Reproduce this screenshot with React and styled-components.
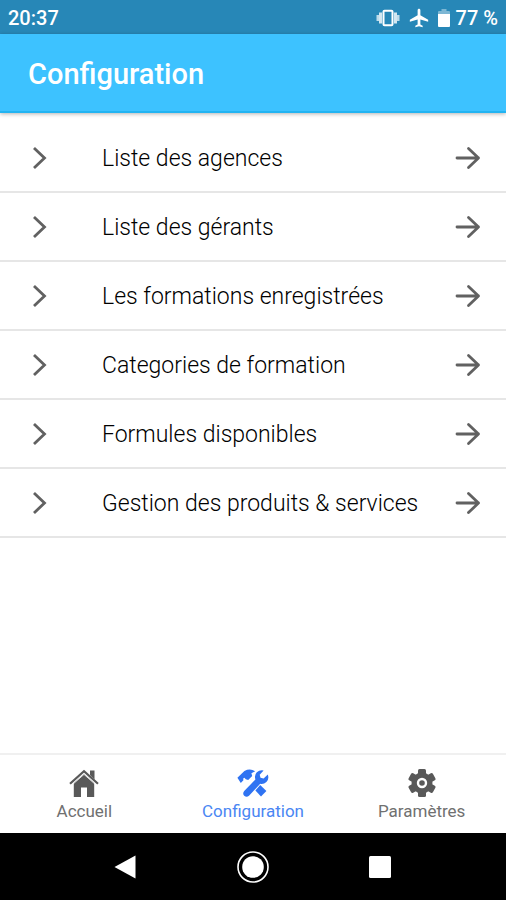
import React from 'react';
import styled, { createGlobalStyle } from 'styled-components';
import { MdAirplanemodeActive } from 'react-icons/md';

const HomeIcon = () => (
  <svg width="32" height="30" viewBox="0 0 32 30" fill="currentColor">
    <path d="M22 2.5h4.5v9L22 7z" />
    <path d="M16 6L5.8 15V29h7.2v-9.5h6V29h7.2V15z" />
    <path d="M2 15.8L16 3.2l14 12.6" fill="none" stroke="currentColor" strokeWidth="2.2" />
    <path d="M3.8 17.2L16 6.4l12.2 10.8" fill="none" stroke="#fff" strokeWidth=".8" />
  </svg>
);

const ToolsIcon = () => (
  <svg width="32" height="30" viewBox="0 0 32 30" fill="currentColor">
    <path d="M.4 9.8L7.4 3q5.6-3 10.8.2l-3.8 2 .8 2.7-4 4.2-2.4-.8-1.4-1.5-1.2.6.2 1.8-2.6 2.8z" />
    <path d="M23.2 17l6.2 6-5.4 5.4-5.6-6z" />
    <path d="M26.6 2.4l-3.9 4.4.8 3 3.1.7 4.2-4q1.6 4.4-1.4 7.4-2.8 2.6-6.2 1.8L12 27.8q-2.4 2-4.8 0-2-2.4 0-4.8L18.4 11.5q-1.4-4.2 1.4-7.2 3-2.8 6.8-1.9z" />
  </svg>
);

const GearIcon = () => (
  <svg width="32" height="30" viewBox="0 0 32 30" fill="currentColor">
    <rect x="12" y="1" width="8" height="28" rx="1.5" />
    <rect x="12" y="1" width="8" height="28" rx="1.5" transform="rotate(60 16 15)" />
    <rect x="12" y="1" width="8" height="28" rx="1.5" transform="rotate(120 16 15)" />
    <circle cx="16" cy="15" r="10.5" />
    <circle cx="16" cy="15" r="4" stroke="#fff" strokeWidth="2.4" />
  </svg>
);

const ChevronIcon = () => (
  <svg width="28" height="28" viewBox="0 0 28 28" fill="none" stroke="currentColor" strokeWidth="2.8">
    <path d="M8 4l10.5 10L8 24" />
  </svg>
);

const ArrowIcon = () => (
  <svg width="28" height="28" viewBox="0 0 28 28" fill="none" stroke="currentColor" strokeWidth="2.8" strokeLinecap="round" strokeLinejoin="round">
    <path d="M4 14h21.5M15.5 4.4L25.5 14l-10 9.6" />
  </svg>
);

const VibrateIcon = () => (
  <svg width="24" height="20" viewBox="0 0 24 20" fill="#fff">
    <rect x="7.5" y="2.7" width="9" height="14.6" rx="1" fill="none" stroke="#fff" strokeWidth="2" />
    <path d="M3 4.5h3v11H3zM18 4.5h3v11h-3z" opacity=".8" />
    <path d="M.5 7h2.5v6H.5zM21 7h2.5v6H21z" opacity=".7" />
  </svg>
);

const BatteryIcon = () => (
  <svg width="12" height="20" viewBox="0 0 12 20" fill="#fff">
    <path d="M3.5 1h5v2H11q1 0 1 1v2H0V4q0-1 1-1h2.5z" opacity=".4" />
    <path d="M0 6h12v12q0 1-1 1H1q-1 0-1-1z" />
  </svg>
);

const links = [
  'Liste des agences',
  'Liste des gérants',
  'Les formations enregistrées',
  'Categories de formation',
  'Formules disponibles',
  'Gestion des produits & services',
];

const tabs = [
  { label: 'Accueil', icon: HomeIcon },
  { label: 'Configuration', icon: ToolsIcon, active: true },
  { label: 'Paramètres', icon: GearIcon },
];

const App = () => {
  return (
    <Screen>
      <GlobalStyle />
      <StatusBar>
        <span>20:37</span>
        <StatusIcons>
          <VibrateIcon />
          <MdAirplanemodeActive size={22} />
          <Battery>
            <BatteryIcon />
            <span>77 %</span>
          </Battery>
        </StatusIcons>
      </StatusBar>
      <Header>
        <Title>Configuration</Title>
      </Header>
      <List>
        {links.map((label) => (
          <li key={label}>
            <Row href="#">
              <ChevronIcon />
              <RowLabel>{label}</RowLabel>
              <ArrowIcon />
            </Row>
          </li>
        ))}
      </List>
      <TabBar>
        {tabs.map(({ label, icon: Icon, active }) => (
          <Tab key={label} type="button" $active={active}>
            <Icon />
            <TabLabel $active={active}>{label}</TabLabel>
          </Tab>
        ))}
      </TabBar>
      <SystemBar>
        <SystemButton type="button" aria-label="Retour">
          <svg width="32" height="32" viewBox="0 0 32 32" fill="#fff">
            <path d="M25.5 4.5v23L4.5 16z" />
          </svg>
        </SystemButton>
        <SystemButton type="button" aria-label="Écran d'accueil">
          <svg width="32" height="32" viewBox="0 0 32 32">
            <circle cx="16" cy="16" r="15" fill="none" stroke="#fff" strokeWidth="1.6" />
            <circle cx="16" cy="16" r="10.8" fill="#fff" />
          </svg>
        </SystemButton>
        <SystemButton type="button" aria-label="Applications récentes">
          <svg width="32" height="32" viewBox="0 0 32 32">
            <rect x="5" y="5" width="22" height="22" rx="1.5" fill="#fff" />
          </svg>
        </SystemButton>
      </SystemBar>
    </Screen>
  );
};

const GlobalStyle = createGlobalStyle`
  * {
    box-sizing: border-box;
  }

  body {
    margin: 0;
    background: #fff;
    font-family: Roboto, 'Liberation Sans', sans-serif;
  }

  button {
    border: 0;
    padding: 0;
    background: none;
    font: inherit;
    cursor: pointer;
  }
`;

const Screen = styled.div`
  display: flex;
  flex-direction: column;
  min-height: 100vh;
`;

const StatusBar = styled.div`
  display: flex;
  align-items: center;
  justify-content: space-between;
  height: 34px;
  padding: 2px 8px 0;
  background: #2787b7;
  color: #fff;
  font-size: 20px;
  font-weight: 500;
`;

const StatusIcons = styled.div`
  display: flex;
  align-items: center;
  gap: 8px;
`;

const Battery = styled.div`
  display: flex;
  align-items: center;
  gap: 6px;
`;

const Header = styled.header`
  display: flex;
  align-items: center;
  height: 79px;
  padding: 2px 28px 0;
  background: #3dc2ff;
  border-bottom: 2px solid #22b4f2;
  box-shadow: 0 1px 4px rgba(0, 0, 0, 0.3);
`;

const Title = styled.h1`
  margin: 0;
  color: #fff;
  font-size: 29px;
  font-weight: 500;
`;

const List = styled.ul`
  flex: 1;
  margin: 0;
  padding: 11px 0 0;
  list-style: none;
`;

const Row = styled.a`
  display: flex;
  align-items: center;
  height: 69px;
  padding: 0 25px 0 26px;
  border-bottom: 2px solid #e6e6e6;
  color: #616161;
  text-decoration: none;
`;

const RowLabel = styled.span`
  flex: 1;
  margin-left: 48px;
  padding-top: 1px;
  color: #000;
  font-size: 23px;
  font-weight: 300;
`;

const TabBar = styled.nav`
  display: flex;
  height: 80px;
  border-top: 2px solid #f0f0f0;
`;

const Tab = styled.button`
  display: flex;
  flex: 1;
  flex-direction: column;
  align-items: center;
  justify-content: center;
  gap: 3px;
  color: ${({ $active }) => ($active ? '#2f73f2' : '#595959')};
`;

const TabLabel = styled.span`
  color: ${({ $active }) => ($active ? '#4a86f3' : '#707070')};
  font-size: 17px;
  line-height: 20px;
`;

const SystemBar = styled.div`
  display: flex;
  align-items: center;
  justify-content: center;
  gap: 95px;
  height: 67px;
  background: #000;
`;

const SystemButton = styled.button`
  display: flex;
`;

export default App;
